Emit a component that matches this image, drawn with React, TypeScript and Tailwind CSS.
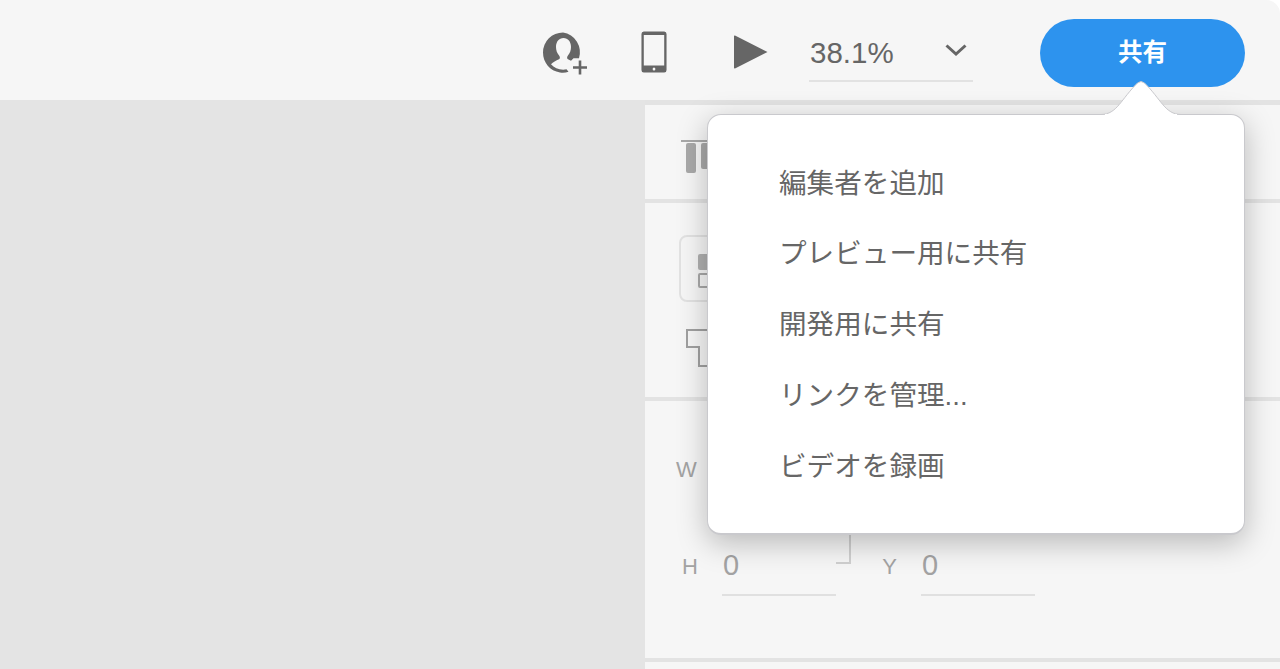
const MENU = ['編集者を追加', 'プレビュー用に共有', '開発用に共有', 'リンクを管理...', 'ビデオを録画'];

const FONT = "font-['Liberation_Sans','Noto_Sans_CJK_JP',sans-serif]";

function AddUserIcon() {
  return (
    <svg width="50" height="50" viewBox="0 0 50 50" className="shrink-0">
      <path
        fillRule="evenodd"
        d="M22 2.500a20 20 0 0 0-20 20c0 10 7 18.500 17 20 3 .4 6 .2 8.500-.8l-2-2.400c-6 1.200-12-1-15.500-5 2-2.500 5-3.500 8-5 1-.6 1.200-2 .4-3.400-2.400-2.800-3.400-5.800-3.400-9 0-5.200 3-9 7.500-9s7.500 3.800 7.500 9c0 3.200-1 6.200-3.400 9-.8 1.400-.6 2.800.4 3.400l3 1.500 2.500-2.500h5.500A20 20 0 0 0 22 2.500z"
        fill="#666666"
      />
      <path d="M39 30.500v14M32 37.500h14" stroke="#666666" strokeWidth="2.600" fill="none" />
    </svg>
  );
}

function PhoneIcon() {
  return (
    <svg width="26" height="42" viewBox="0 0 28 42" preserveAspectRatio="none" className="shrink-0">
      <path
        fillRule="evenodd"
        d="M3 .5h22a2.500 2.500 0 0 1 2.500 2.500v36a2.500 2.500 0 0 1-2.500 2.500H3A2.500 2.500 0 0 1 .5 39V3A2.500 2.500 0 0 1 3 .5zM3 4v30.500h22V4z"
        fill="#666666"
      />
      <circle cx="14" cy="38" r="1.500" fill="#f6f6f6" />
    </svg>
  );
}

function PlayIcon() {
  return (
    <svg width="36" height="36" viewBox="0 0 36 36" className="shrink-0">
      <path d="M2 1.500 34.500 18 2 34.500a.8.8 0 0 1-1-.8V2.300a.8.8 0 0 1 1-.8z" fill="#666666" />
    </svg>
  );
}

function Chevron() {
  return (
    <svg width="24" height="16" viewBox="0 0 24 16">
      <path d="M2.500 3.500 12 12l9.500-8.500" stroke="#666666" strokeWidth="3" fill="none" />
    </svg>
  );
}

// left-over bits of the inspector showing past the popup
function NumberField({ label, labelWidth }: { label: string; labelWidth: string }) {
  return (
    <div className="flex items-start">
      <span className={`${labelWidth} text-[22px] leading-[26px] text-[#a3a3a3] text-right pt-[7px]`}>{label}</span>
      <div className="ml-[24px] w-[114px] h-[49px] border-b-2 border-[#e0e0e0] text-[29px] leading-[33px] text-[#a3a3a3] pl-[1px] pt-[2px]">0</div>
    </div>
  );
}

function Inspector() {
  return (
    <div className="flex-1 flex flex-col gap-[4px] bg-[#e3e3e3] pt-[5px]">
      {/* tabs */}
      <div className="h-[94px] bg-[#f6f6f6] pl-[36px] pt-[35px]">
        <div className="w-[40px] h-[2px] bg-[#a8a8a8]" />
        <div className="flex gap-[5px] ml-[5px] mt-[1px]">
          <div className="w-[10px] h-[30px] rounded-[2px] bg-[#a9a9a9]" />
          <div className="w-[10px] h-[26px] rounded-[2px] bg-[#a9a9a9]" />
        </div>
      </div>
      {/* align + shapes */}
      <div className="h-[194px] bg-[#f6f6f6] pl-[34px] pt-[32px]">
        <div className="w-[80px] h-[67px] rounded-[8px] border-2 border-[#e2e2e2] pl-[17px] pt-[17px]">
          <div className="w-[16px] h-[16px] bg-[#b0b0b0] rounded-[2px]" />
          <div className="w-[16px] h-[15px] mt-[3px] border-2 border-[#a8a8a8] rounded-[2px]" />
        </div>
        <svg width="40" height="38" viewBox="0 0 40 38" className="ml-[7px] mt-[27px]">
          <path d="M40 1H1v17h12v19H40" fill="none" stroke="#a0a0a0" strokeWidth="2" />
        </svg>
      </div>
      {/* size */}
      <div className="h-[257px] bg-[#f6f6f6] pl-[31px] pt-[55px] flex flex-col gap-[64px]">
        <span className="w-[21px] text-[22px] leading-[26px] text-[#a3a3a3] mt-[1px]">W</span>
        <div className="flex items-start">
          <NumberField label="H" labelWidth="w-[22px]" />
          <div className="w-[15px] h-[44px] -mt-[27px] border-r-2 border-b-2 border-[#d0d0d0]" />
          <div className="ml-[30px]">
            <NumberField label="Y" labelWidth="w-[16px]" />
          </div>
        </div>
      </div>
      <div className="flex-1 bg-[#f6f6f6]" />
    </div>
  );
}

export default function App() {
  return (
    <div className={`${FONT} relative w-[1280px] h-[669px] overflow-hidden bg-white`}>
      <div className="h-[100px] bg-[#f6f6f6] rounded-tr-[14px] flex items-start pl-[541px]">
        <div className="mt-[30px] w-[50px]">
          <AddUserIcon />
        </div>
        <div className="ml-[50px] mt-[31px]">
          <PhoneIcon />
        </div>
        <div className="ml-[66px] mt-[34px]">
          <PlayIcon />
        </div>
        <div className="ml-[40px] mt-[36px] w-[164px] h-[46px] border-b-2 border-[#e2e2e2] flex justify-between pl-[1px] pr-[5px]">
          <span className="text-[29.500px] leading-[34px] text-[#666666]">38.1%</span>
          <span className="pt-[6px]"><Chevron /></span>
        </div>
        <button className="ml-[67px] mt-[19px] w-[205px] h-[68px] rounded-full bg-[#2d93ee] text-white text-[24.500px] font-bold">
          共有
        </button>
      </div>
      <div className="flex h-[569px] bg-[#e3e3e3]">
        <div className="w-[645px] bg-[#e4e4e4]" />
        <Inspector />
      </div>

      {/* share popup */}
      <div className="absolute left-[707px] top-[114px] w-[538px] h-[421px] bg-white rounded-[14px] border border-[#c9c9cd] border-b-2 shadow-[0_8px_30px_rgba(0,0,0,0.25)] pt-[33px]">
        <svg width="80" height="38" viewBox="0 0 80 38" className="absolute left-[393px] -top-[36px]">
          <path d="M0 35.500C16 35.500 20 20 36.500 4Q40 1 43.500 4C60 20 64 35.500 80 35.500" fill="white" stroke="#c9c9cd" strokeWidth="1" />
          <rect x="4" y="35" width="72" height="3" fill="white" />
        </svg>
        {MENU.map((item) => (
          <div key={item} className="h-[70.750px] flex items-center pl-[71px] text-[27.600px] text-[#666666]">
            {item}
          </div>
        ))}
      </div>
    </div>
  );
}
